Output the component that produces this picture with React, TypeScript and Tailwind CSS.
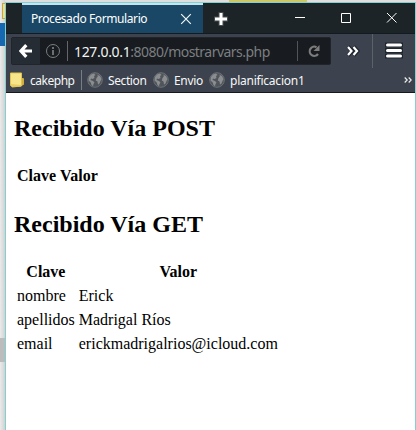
import React from "react";

const uiFont = "font-['Noto_Sans','Open_Sans',sans-serif]";

function Globe() {
  return (
    <svg width="16" height="16" viewBox="0 0 16 16" className="shrink-0">
      <circle cx="8" cy="8" r="7.3" fill="#50555b" stroke="#6d7174" strokeWidth="1" />
      <path d="M2 5 4 2.5 7 1.5 8.5 3 7 4 7.5 6 5.5 7 4 6.5 3.5 8 6 9 7.5 10.5 6.5 12 6 14.2 4.5 13 3.7 10.5 1.5 8.5Z" fill="#8b8e90" />
      <path d="M9.5 6 11 4 10 2.5 13 4 14.5 7 13.5 9 12.5 11.5 11 12.5 10.5 9.5 8.8 8.5Z" fill="#8b8e90" />
    </svg>
  );
}

function Folder() {
  return (
    <svg width="15" height="16" viewBox="0 0 15 16" className="shrink-0">
      <path d="M11 6h2.5l.5 1v5.500l-1.500 1H10z" fill="#d4ae3b" />
      <path d="M.5 1h11v13L2.500 15 .5 13.500z" fill="#f7e58c" stroke="#e1c351" />
      <path d="M1 12l10 1v1.500H2.500L1 13z" fill="#e9cc61" />
    </svg>
  );
}

function TabBar() {
  return (
    <div className="flex h-[31px] shrink-0 border-b border-[#141b20] bg-[#1d2427] pl-4">
      <div className="flex h-[30px] w-[181px] items-center border-t-2 border-[#c5e4ef] bg-[#194765] pl-[9px] text-white">
        <span className="w-[117px] whitespace-nowrap text-[12px] leading-[18px] tracking-[-0.4px]">Procesado Formulario</span>
        <svg width="12" height="12" viewBox="0 0 12 12" className="ml-8 shrink-0">
          <path d="M1.200 1.200l9.600 9.600M10.800 1.200l-9.600 9.600" stroke="#f1f7fb" strokeWidth="1.200" />
        </svg>
      </div>
      <svg width="16" height="16" viewBox="0 0 16 16" className="ml-[10px] mt-2">
        <path d="M8 1v14M1 8h14" stroke="#454c4d" strokeWidth="5" />
        <path d="M8 2v12M2 8h12" stroke="#fff" strokeWidth="3" />
      </svg>
      <svg width="104" height="12" viewBox="0 0 104 12" className="ml-[66px] mt-[9px]" fill="none" stroke="#fff">
        <path d="M0 5.500h10M46.500 1.500h9v9h-9zM92 1l9.500 9.500M101.500 1L92 10.500" />
      </svg>
    </div>
  );
}

function Toolbar() {
  return (
    <div className="flex h-[34px] shrink-0 bg-[#3c424e] pl-[5px] pt-[3px]">
      <div className="flex h-[28px] w-[320px] shrink-0 items-center rounded-[2px] border border-[#21252a] bg-[#181c20]">
        <div className="flex h-full w-[28px] items-center justify-center bg-[#262c34]">
          <svg width="14" height="14" viewBox="0 0 14 14">
            <path d="M7.300 1.200 2 7l5.300 5.800M3 7h10" fill="none" stroke="#fff" strokeWidth="3.200" />
          </svg>
        </div>
        <svg width="16" height="16" viewBox="0 0 16 16" className="ml-[5px] shrink-0" fill="none" stroke="#7b7e7e">
          <circle cx="8" cy="8" r="6.500" />
          <path d="M8 7v5M8 4v2" strokeWidth="1.700" />
        </svg>
        <div className="ml-[6px] h-5 w-px bg-[#63676a]" />
        <span className="ml-[6px] w-[223px] whitespace-nowrap pt-px text-[14px] leading-[20px] tracking-[-0.53px] text-[#7c7f80]">
          <span className="tracking-[-0.33px] text-[#f2f3f3]">127.0.0.1</span>:8080/mostrarvars.php
        </span>
        <div className="h-5 w-px bg-[#50555a]" />
        <svg width="14" height="14" viewBox="0 0 14 14" className="ml-[9px] shrink-0">
          <path d="M9.500 3.200A4.600 4.600 0 1 0 11 10" fill="none" stroke="#7c7c7b" strokeWidth="2.200" />
          <path d="M12.500 1v6h-6z" fill="#7c7c7b" />
        </svg>
      </div>
      <svg width="14" height="14" viewBox="0 0 14 14" className="ml-[15px] mt-[7px] shrink-0" fill="none">
        <path d="M2 2.500 6 7l-4 4.500M7.500 2.500l4 4.500-4 4.500" stroke="#20262d" strokeWidth="4" />
        <path d="M2 3 5.500 7 2 11M7.500 3 11 7l-3.500 4" stroke="#fff" strokeWidth="2.200" />
      </svg>
      <div className="ml-[12px] -mt-[3px] h-[34px] w-px bg-[#5b626b]" />
      <svg width="18" height="17" viewBox="0 0 18 17" className="ml-[12px] mt-[5px] shrink-0">
        <path d="M0 3h18M0 8.500h18M0 14h18" stroke="#20262d" strokeWidth="5" />
        <path d="M2.500 3h13M2.500 8.500h13M2.500 14h13" stroke="#fff" strokeWidth="3" strokeLinecap="round" />
      </svg>
    </div>
  );
}

function Bookmarks() {
  return (
    <div className="flex h-[25px] shrink-0 items-center border-b border-[#15191e] bg-[#3c424e] pl-1 text-[12px] leading-[18px] text-[#f7f7f7]">
      <Folder />
      <span className="ml-[5px] w-[51px] pt-[2px] tracking-[-0.48px]">cakephp</span>
      <div className="h-5 w-px bg-[#777e86]" />
      <span className="ml-[5px] flex"><Globe /></span>
      <span className="ml-[5px] w-[45px] pt-[2px] tracking-[-0.4px]">Section</span>
      <Globe />
      <span className="ml-[5px] w-[35px] pt-[2px] tracking-[-0.3px]">Envio</span>
      <Globe />
      <span className="ml-[5px] w-[174px] pt-[2px] tracking-[-0.23px]">planificacion1</span>
      <svg width="8" height="8" viewBox="0 0 8 8" fill="none" stroke="#eee" strokeWidth="1.200">
        <path d="M.7 1.500 3.200 4 .7 6.500M4.700 1.500 7.200 4 4.700 6.500" />
      </svg>
    </div>
  );
}

export default function App() {
  return (
    <div className={`flex h-[430px] w-[416px] overflow-hidden bg-[#e6e6e6] ${uiFont}`}>
      <div className="flex w-[5px] shrink-0 flex-col bg-gradient-to-r from-[#ebebeb] to-[#d1d1d1]">
        <div className="mt-[3px] ml-[2px] h-4 border-y border-l border-[#c6a83b] bg-[#eddc8c]" />
        <div className="mt-1 h-[23px] bg-[#1767b1]" />
        <div className="mt-[292px] h-6 bg-[#bcbcbc]" />
      </div>
      <div className="flex min-w-0 flex-1 flex-col">
        <div className="flex h-[2px] shrink-0 bg-[#dedede]">
          <div className="ml-[224px] w-[78px] bg-[#cbc967]" />
        </div>
        <div className="flex min-h-0 flex-1 flex-col border-x border-t border-[#83d0d1] bg-white">
          <TabBar />
          <Toolbar />
          <Bookmarks />
          <main className="px-2 pt-[21px] font-['Liberation_Serif',serif] text-[16px] leading-[22px] text-black">
            <h2 className="h-[28px] text-[24px] font-bold leading-[28px]">Recibido Vía POST</h2>
            <table className="mt-[21px] border-separate border-spacing-[2px]">
              <thead>
                <tr><th className="h-[22px] px-px py-0">Clave</th><th className="px-px py-0">Valor</th></tr>
              </thead>
            </table>
            <h2 className="mt-[21px] h-[28px] text-[24px] font-bold leading-[28px]">Recibido Vía GET</h2>
            <table className="mt-[21px] border-separate border-spacing-[2px] text-left">
              <thead className="text-center">
                <tr><th className="px-px py-0">Clave</th><th className="px-px py-0">Valor</th></tr>
              </thead>
              <tbody>
                <tr><td className="px-px py-0">nombre</td><td className="px-px py-0">Erick</td></tr>
                <tr><td className="px-px py-0">apellidos</td><td className="px-px py-0">Madrigal Ríos</td></tr>
                <tr><td className="px-px py-0">email</td><td className="px-px py-0">erickmadrigalrios@icloud.com</td></tr>
              </tbody>
            </table>
          </main>
        </div>
      </div>
    </div>
  );
}
